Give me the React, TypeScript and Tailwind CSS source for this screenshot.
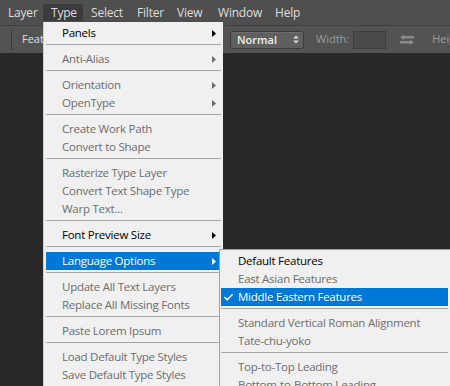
import { Check } from 'lucide-react';

type Item = { t: string; en?: boolean; arrow?: boolean; hi?: boolean; check?: boolean } | 'sep';

const mainItems: Item[] = [
  { t: 'Panels', en: true, arrow: true },
  'sep',
  { t: 'Anti-Alias', arrow: true },
  'sep',
  { t: 'Orientation', arrow: true },
  { t: 'OpenType', arrow: true },
  'sep',
  { t: 'Create Work Path' },
  { t: 'Convert to Shape' },
  'sep',
  { t: 'Rasterize Type Layer' },
  { t: 'Convert Text Shape Type' },
  { t: 'Warp Text...' },
  'sep',
  { t: 'Font Preview Size', en: true, arrow: true },
  'sep',
  { t: 'Language Options', en: true, arrow: true, hi: true },
  'sep',
  { t: 'Update All Text Layers' },
  { t: 'Replace All Missing Fonts' },
  'sep',
  { t: 'Paste Lorem Ipsum' },
  'sep',
  { t: 'Load Default Type Styles' },
  { t: 'Save Default Type Styles' },
];

const subItems: Item[] = [
  { t: 'Default Features', en: true },
  { t: 'East Asian Features' },
  { t: 'Middle Eastern Features', en: true, hi: true, check: true },
  'sep',
  { t: 'Standard Vertical Roman Alignment' },
  { t: 'Tate-chu-yoko' },
  'sep',
  { t: 'Top-to-Top Leading' },
  { t: 'Bottom-to-Bottom Leading' },
];

const topMenus = [
  { t: 'Layer', w: 'w-[43px]' },
  { t: 'Type', w: 'w-[40px]', on: true },
  { t: 'Select', w: 'w-[46px]' },
  { t: 'Filter', w: 'w-[40px]' },
  { t: 'View', w: 'w-[41px]' },
  { t: 'Window', w: 'w-[57px]' },
  { t: 'Help', w: 'w-[40px]' },
];

function Arrow({ color }: { color: string }) {
  return (
    <svg width="4" height="7" viewBox="0 0 4 7" className="shrink-0">
      <path d="M0 0 L4 3.5 L0 7 Z" fill={color} />
    </svg>
  );
}

function MenuList({ items, textPad }: { items: Item[]; textPad: string }) {
  return (
    <>
      {items.map((it, i) => {
        if (it === 'sep') {
          return (
            <div key={i} className="h-[8px] pt-[2px]">
              <div className="h-px bg-[#a4a4a4]" />
            </div>
          );
        }
        const color = it.hi ? 'text-white' : it.en ? 'text-black' : 'text-[#6d6d6d]';
        return (
          <div
            key={i}
            className={`relative flex items-center h-[18px] ${textPad} pr-[5px] ${it.hi ? 'bg-[#0078d7]' : ''}`}
          >
            {it.check && (
              <Check size={11} strokeWidth={3.5} className="absolute left-[2px] top-[4px] text-white" />
            )}
            <span className={`flex-1 whitespace-nowrap leading-[18px] ${color}`}>{it.t}</span>
            {it.arrow && <Arrow color={it.hi ? '#ffffff' : it.en ? '#000000' : '#6d6d6d'} />}
          </div>
        );
      })}
    </>
  );
}

export default function App() {
  return (
    <div className="relative w-[450px] h-[386px] overflow-hidden bg-[#282828] flex flex-col text-[11.5px] tracking-[-0.25px] font-['Open_Sans',sans-serif]">
      {/* menu bar */}
      <div className="h-[25px] bg-[#4f4f4f] flex items-center shrink-0 text-[12px] tracking-[-0.2px]">
        {topMenus.map((m) => (
          <div key={m.t} className={`${m.w} shrink-0 h-[18px] flex items-center`}>
            <span
              className={`h-[17px] flex items-center pl-[8px] w-full text-[#dedede] ${m.on ? 'bg-[#3b3b3b] rounded-t-[2px]' : ''}`}
            >
              {m.t}
            </span>
          </div>
        ))}
      </div>

      {/* options bar */}
      <div className="h-[28px] bg-[#535353] border-t border-[#3e3e3e] flex items-center shrink-0 tracking-normal">
        <div className="w-[230px] shrink-0 flex items-center h-full">
          <div className="ml-[11px] w-px h-[20px] bg-[#3a3a3a]" />
          <span className="ml-[10px] text-[11px] text-[#e0e0e0]">Feather:</span>
        </div>
        <div className="w-[74px] shrink-0 h-[18px] rounded-[3px] bg-[#5f5f5f] border border-[#3c3c3c] flex items-center pl-[6px] pr-[4px] shadow-[inset_0_1px_0_#6e6e6e]">
          <span className="flex-1 text-[11px] font-semibold text-[#efefef] leading-none">Normal</span>
          <svg width="6" height="9" viewBox="0 0 6 9">
            <path d="M0 3.5 L3 0.5 L6 3.5 Z M0 5.5 L3 8.5 L6 5.5 Z" fill="#d8d8d8" />
          </svg>
        </div>
        <span className="ml-[12px] shrink-0 text-[11px] text-[#9c9c9c]">Width:</span>
        <div className="ml-[4px] shrink-0 w-[33px] h-[18px] bg-[#4a4a4a] border border-[#3e3e3e]" />
        <svg width="14" height="12" viewBox="0 0 14 12" className="ml-[14px] shrink-0">
          <path d="M4 1 L14 1 L14 3.5 L4 3.5 L4 5 L0 2.2 L4 -0.5 Z" fill="#8a8a8a" transform="translate(0 1)" />
          <path d="M0 7 L10 7 L10 5.5 L14 8.2 L10 11 L10 9.5 L0 9.5 Z" fill="#8a8a8a" />
        </svg>
        <span className="ml-[18px] shrink-0 text-[11px] text-[#9c9c9c] whitespace-nowrap">Height:</span>
      </div>

      <div className="flex-1 bg-[#282828]" />

      {/* Type menu */}
      <div className="absolute left-[43px] top-[22px] w-[180px] h-[380px] bg-[#f0f0f0] border-l border-[#d0d0d0] pt-[2px] pl-[2px] pr-[2px]">
        <MenuList items={mainItems} textPad="pl-[16px]" />
      </div>

      {/* Language Options submenu */}
      <div className="absolute left-[219px] top-[249px] w-[235px] h-[160px] bg-[#f0f0f0] border border-[#a0a0a0] pt-[2px] pl-[1px] pr-[5px]">
        <MenuList items={subItems} textPad="pl-[17px]" />
      </div>
    </div>
  );
}
